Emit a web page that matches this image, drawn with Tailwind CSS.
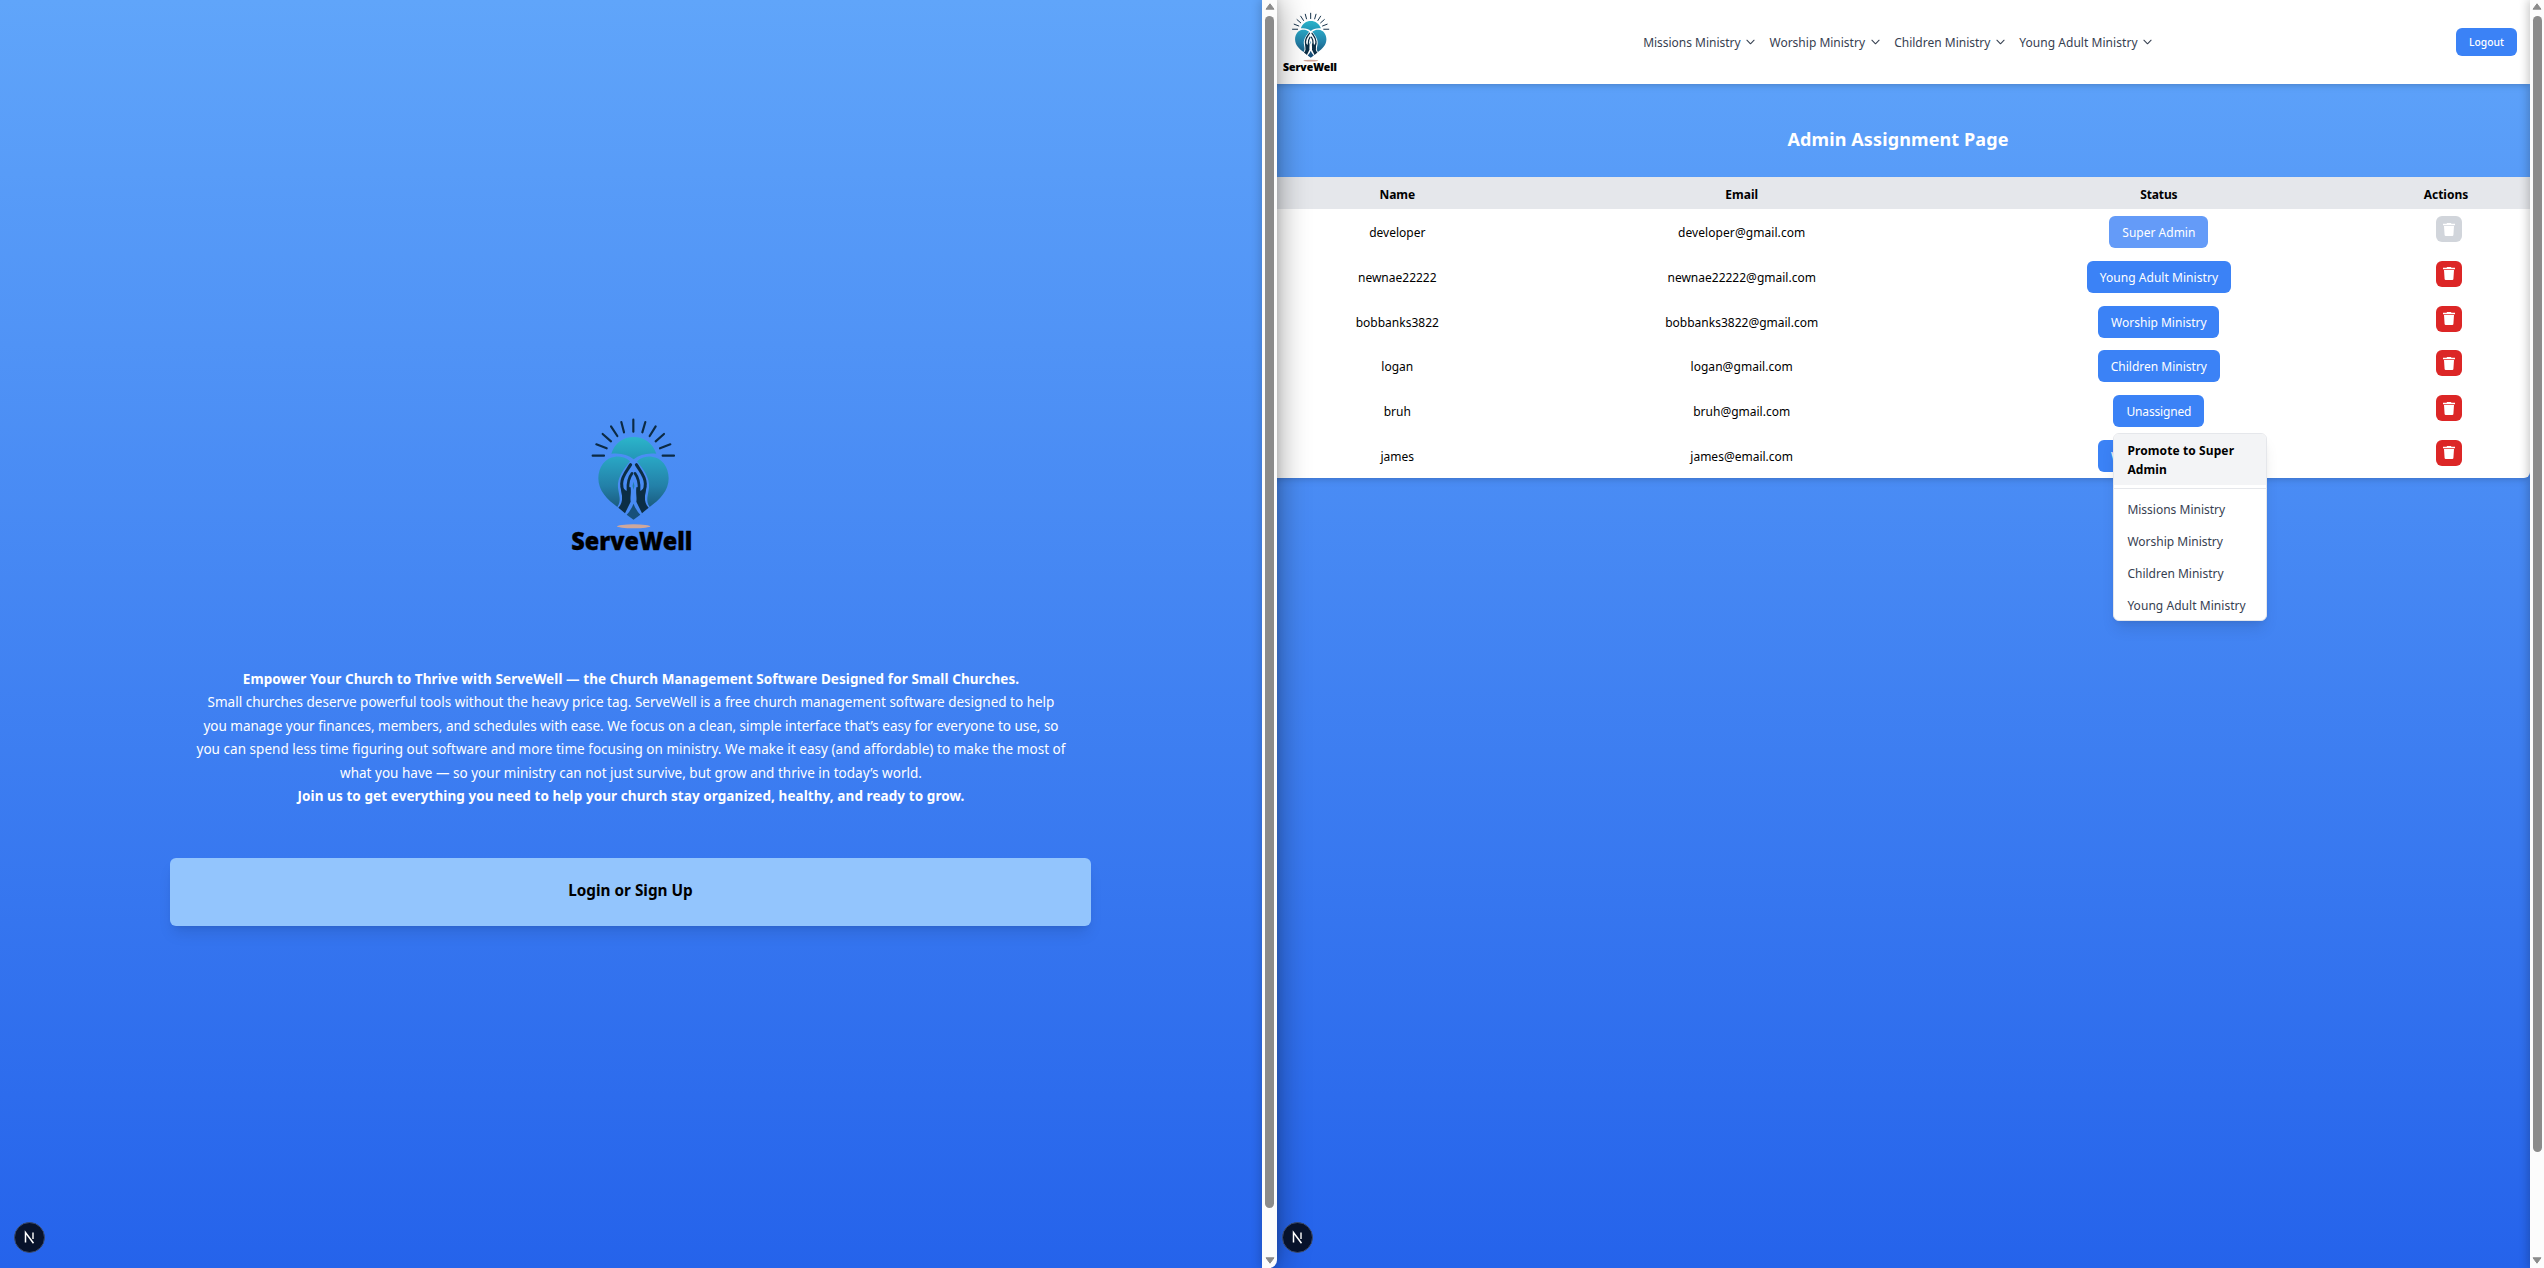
<!DOCTYPE html>
<html lang="en">
<head>
<meta charset="utf-8">
<title>ServeWell</title>
<script src="https://cdn.jsdelivr.net/npm/@tailwindcss/browser@4"></script>
</head>
<body class="h-[1268px] w-[2544px] overflow-hidden bg-[#2563eb] font-['Noto_Sans',sans-serif] text-[12px] text-black">

<svg class="absolute size-0">
  <defs>
    <linearGradient id="dome" x1="0" y1="0" x2="0" y2="1"><stop offset="0" stop-color="#2cb5ca"/><stop offset="1" stop-color="#2396b8"/></linearGradient>
    <linearGradient id="lobe" x1="0" y1="165" x2="0" y2="350" gradientUnits="userSpaceOnUse"><stop offset="0" stop-color="#2aa9c6"/><stop offset=".5" stop-color="#2380a8"/><stop offset="1" stop-color="#164a6c"/></linearGradient>
  </defs>
  <symbol id="logo" viewBox="85 50 375 405">
    <path d="M156 166H190M167 132L198 144M186 101L211 123M211 78L230 107M242 65L250 96M278 58V94M314 65L305 96M345 78L327 107M370 101L345 123M389 132L358 144M366 166H400" fill="none" stroke="#0c2a44" stroke-width="6.5" stroke-linecap="round"/>
    <path d="M212 160C222 128 248 110 279 110C310 110 336 128 347 160C318 157 296 163 279 177C262 163 240 157 212 160Z" fill="url(#dome)"/>
    <g id="half">
      <path d="M268 183C256 172 240 168 224 169C194 171 173 200 173 234C173 272 200 298 230 320C243 302 235 285 232 262C229 232 250 206 268 183Z" fill="url(#lobe)"/>
      <path d="M270 193C258 212 243 228 243 250C243 266 250 280 249 298" fill="none" stroke="#0c2e45" stroke-width="9" stroke-linecap="round"/>
      <path d="M274 219C264 232 261 250 262 268" fill="none" stroke="#0c2e45" stroke-width="8" stroke-linecap="round"/>
      <path d="M240 258Q250 264 257 272L262 262Q270 258 270 262C272 280 268 290 270 304L253 339L233 322C248 308 246 285 240 258Z" fill="#0c2e45"/>
    </g>
    <use href="#half" transform="matrix(-1 0 0 1 557 0)"/>
    <path d="M278.500 310Q286 330 299 343L278.500 358L258 343Q271 330 278.500 310Z" fill="#17507a"/>
    <path d="M278.500 244Q284 256 278.500 268Q273 256 278.500 244Z" fill="#2380a8"/>
    <ellipse cx="279" cy="378" rx="50" ry="6" fill="#cfa79b"/>
    <text x="92" y="448" textLength="363" lengthAdjust="spacingAndGlyphs" font-family="Noto Sans, sans-serif" font-weight="900" font-size="72" stroke="#000" stroke-width="1" stroke-linejoin="round">ServeWell</text>
  </symbol>
  <symbol id="chevron" viewBox="0 0 10 6"><path d="M1 1L5 5L9 1" fill="none" stroke="#374151" stroke-width="1.2" stroke-linecap="round" stroke-linejoin="round"/></symbol>
  <symbol id="trash" viewBox="0 0 12 13"><path d="M4 0H8L8.400 .8H12V2.300H0V.8H3.600ZM1 3.100H11L10.400 12Q10.300 13 9.300 13H2.700Q1.700 13 1.600 12Z" fill="#fff"/></symbol>
  <symbol id="next" viewBox="0 0 31 31">
    <circle cx="15.500" cy="15.500" r="15" fill="#07122b" stroke="#3c4a6a" stroke-width="1"/>
    <path d="M11.500 20.500V10.500L19.500 21.300" fill="none" stroke="#fff" stroke-width="1.500"/>
    <path d="M19 10.500V17" fill="none" stroke="#fff" stroke-width="1.400"/>
  </symbol>
</svg>

<div class="flex h-full">

  <!-- Landing page window -->
  <div class="relative z-10 flex h-full w-[1277px] shrink-0 overflow-visible rounded-br-lg shadow-[0_0_32px_rgba(0,0,0,0.42)]">
    <main class="flex w-[1262px] flex-col items-center bg-linear-to-b/srgb from-[#60a5fa] to-[#2563eb] pt-[417px]">
      <svg class="h-[135px] w-[125px]"><use href="#logo"/></svg>
      <div class="mt-[116px] text-center text-[13.5px] leading-[23.4px] whitespace-nowrap text-white">
        <p class="font-bold tracking-[0.085px]">Empower Your Church to Thrive with ServeWell — the Church Management Software Designed for Small Churches.</p>
        <p>Small churches deserve powerful tools without the heavy price tag. ServeWell is a free church management software designed to help</p>
        <p class="tracking-[-0.014px]">you manage your finances, members, and schedules with ease. We focus on a clean, simple interface that’s easy for everyone to use, so</p>
        <p class="tracking-[0.034px]">you can spend less time figuring out software and more time focusing on ministry. We make it easy (and affordable) to make the most of</p>
        <p class="tracking-[0.017px]">what you have — so your ministry can not just survive, but grow and thrive in today’s world.</p>
        <p class="font-bold tracking-[0.082px]">Join us to get everything you need to help your church stay organized, healthy, and ready to grow.</p>
      </div>
      <button class="mt-[49.6px] mr-px h-[68px] w-[921px] rounded-md bg-[#93c5fd] pb-[3px] text-[15.3px] font-bold shadow-lg">Login or Sign Up</button>
      <svg class="absolute top-[1222px] left-[14px] size-[31px]"><use href="#next"/></svg>
    </main>
    <div class="flex w-[15px] flex-col items-center rounded-br-lg bg-[#fcfcfc] pt-[3px] pb-[4px] shadow-[-2px_0_10px_rgba(0,0,0,0.18)]">
      <svg class="h-[7px] w-[10px]" viewBox="0 0 10 7"><path d="M5 .8L9 6.200H1Z" fill="#8b8b8b" stroke="#8b8b8b" stroke-linejoin="round"/></svg>
      <div class="mt-[6px] h-[1192px] w-[9px] rounded-full bg-[#8b8b8b]"></div>
      <svg class="mt-auto h-[7px] w-[10px]" viewBox="0 0 10 7"><path d="M5 6.200L9 .8H1Z" fill="#8b8b8b" stroke="#8b8b8b" stroke-linejoin="round"/></svg>
    </div>
  </div>

  <!-- Admin window -->
  <div class="-ml-[11px] flex h-full w-[1278px] shrink-0">
    <main class="flex w-[1264px] flex-col bg-linear-to-b/srgb from-[#60a5fa] to-[#2563eb]">
      <header class="flex h-[84px] shrink-0 items-center bg-white pr-[13px] pl-[16px] shadow-md">
        <svg class="h-[60.2px] w-[55.7px]"><use href="#logo"/></svg>
        <nav class="ml-[305.5px] flex gap-[14.5px] pt-[2px] whitespace-nowrap text-[#374151]">
          <span class="flex items-center gap-[5.500px]"><span class="w-[97.300px] tracking-[-0.027px]">Missions Ministry</span><svg class="mb-[2px] h-[6px] w-[9px]"><use href="#chevron"/></svg></span>
          <span class="flex items-center gap-[5.500px]"><span class="w-[95.700px]">Worship Ministry</span><svg class="mb-[2px] h-[6px] w-[9px]"><use href="#chevron"/></svg></span>
          <span class="flex items-center gap-[5.500px]"><span class="w-[96px]">Children Ministry</span><svg class="mb-[2px] h-[6px] w-[9px]"><use href="#chevron"/></svg></span>
          <span class="flex items-center gap-[5.500px]"><span class="w-[118.400px] tracking-[0.048px]">Young Adult Ministry</span><svg class="mb-[2px] h-[6px] w-[9px]"><use href="#chevron"/></svg></span>
        </nav>
        <button class="ml-auto h-[28px] w-[61px] rounded-[6px] bg-[#3b82f6] pt-px text-[10.3px] font-medium text-white">Logout</button>
      </header>
      <h1 class="mt-[41px] text-center text-[18px] leading-[28px] font-bold tracking-[0.12px] text-white">Admin Assignment Page</h1>

      <section class="mt-[24px] rounded-b-md bg-white text-center shadow-md">
        <div class="grid h-[32px] grid-cols-[262.600px_426.200px_407.200px_168px] items-center bg-[#e5e7eb] pt-[3px] font-bold">
          <span>Name</span><span>Email</span><span class="pl-px tracking-[-0.17px]">Status</span><span>Actions</span>
        </div>

        <div class="grid h-[44.800px] grid-cols-[262.600px_426.200px_407.200px_168px] items-start pt-[7px] leading-[34px]">
          <span>developer</span><span class="tracking-[0.068px]">developer@gmail.com</span>
          <span class="flex justify-center pl-px"><button class="h-[32px] w-[99px] rounded-[6px] bg-[#649bf8] leading-[34px] text-white">Super Admin</button></span>
          <span class="flex justify-center pl-[6px]"><button class="flex size-[26px] items-center justify-center rounded-[6px] bg-[#d1d5db]"><svg class="h-[13px] w-[12px]"><use href="#trash"/></svg></button></span>
        </div>
        <div class="grid h-[44.800px] grid-cols-[262.600px_426.200px_407.200px_168px] items-start pt-[7px] leading-[34px]">
          <span>newnae22222</span><span>newnae22222@gmail.com</span>
          <span class="flex justify-center pl-px"><button class="h-[32px] w-[144px] rounded-[6px] bg-[#3b82f6] leading-[34px] tracking-[0.048px] text-white">Young Adult Ministry</button></span>
          <span class="flex justify-center pl-[6px]"><button class="flex size-[26px] items-center justify-center rounded-[6px] bg-[#dc2626]"><svg class="h-[13px] w-[12px]"><use href="#trash"/></svg></button></span>
        </div>
        <div class="grid h-[44.800px] grid-cols-[262.600px_426.200px_407.200px_168px] items-start pt-[7px] leading-[34px]">
          <span>bobbanks3822</span><span>bobbanks3822@gmail.com</span>
          <span class="flex justify-center pl-px"><button class="h-[32px] w-[121px] rounded-[6px] bg-[#3b82f6] leading-[34px] text-white">Worship Ministry</button></span>
          <span class="flex justify-center pl-[6px]"><button class="flex size-[26px] items-center justify-center rounded-[6px] bg-[#dc2626]"><svg class="h-[13px] w-[12px]"><use href="#trash"/></svg></button></span>
        </div>
        <div class="grid h-[44.800px] grid-cols-[262.600px_426.200px_407.200px_168px] items-start pt-[7px] leading-[34px]">
          <span>logan</span><span class="tracking-[0.05px]">logan@gmail.com</span>
          <span class="flex justify-center pl-px"><button class="h-[32px] w-[122px] rounded-[6px] bg-[#3b82f6] leading-[34px] text-white">Children Ministry</button></span>
          <span class="flex justify-center pl-[6px]"><button class="flex size-[26px] items-center justify-center rounded-[6px] bg-[#dc2626]"><svg class="h-[13px] w-[12px]"><use href="#trash"/></svg></button></span>
        </div>
        <div class="grid h-[44.800px] grid-cols-[262.600px_426.200px_407.200px_168px] items-start pt-[7px] leading-[34px]">
          <span>bruh</span><span>bruh@gmail.com</span>
          <span class="flex justify-center pl-px">
            <span class="relative">
              <button class="block h-[32px] w-[91px] rounded-[6px] bg-[#3b82f6] leading-[34px] tracking-[-0.17px] text-white">Unassigned</button>
              <!-- Role menu -->
              <div class="absolute top-[38px] left-0 z-10 h-[188px] w-[154px] overflow-visible rounded-[6px] border border-[#e5e7eb] bg-white text-left shadow-lg">
                <div class="h-[51px] rounded-t-[5px] bg-[#f3f4f6] pt-[7px] pl-[13px] leading-[19px] font-bold tracking-[0.1px]">Promote to Super<br>Admin</div>
                <div class="mt-[3px] mb-[5px] h-px bg-[#e5e7eb]"></div>
                <div class="pl-[13px] leading-[32px] text-[#374151]">
                  <div>Missions Ministry</div><div>Worship Ministry</div><div>Children Ministry</div><div class="tracking-[0.048px]">Young Adult Ministry</div>
                </div>
              </div>
            </span>
          </span>
          <span class="flex justify-center pl-[6px]"><button class="flex size-[26px] items-center justify-center rounded-[6px] bg-[#dc2626]"><svg class="h-[13px] w-[12px]"><use href="#trash"/></svg></button></span>
        </div>
        <div class="grid h-[44.800px] grid-cols-[262.600px_426.200px_407.200px_168px] items-start pt-[7px] leading-[34px]">
          <span>james</span><span>james@email.com</span>
          <span class="flex justify-center pl-px"><button class="h-[32px] w-[121px] rounded-[6px] bg-[#3b82f6] leading-[34px] text-white">Worship Ministry</button></span>
          <span class="flex justify-center pl-[6px]"><button class="flex size-[26px] items-center justify-center rounded-[6px] bg-[#dc2626]"><svg class="h-[13px] w-[12px]"><use href="#trash"/></svg></button></span>
        </div>
      </section>
      <svg class="absolute top-[1222px] left-[1282px] z-20 size-[31px]"><use href="#next"/></svg>
    </main>
    <div class="z-10 flex w-[14px] flex-col items-center bg-[#fcfcfc] pt-[3px] pb-[4px] shadow-[-2px_0_10px_rgba(0,0,0,0.22)]">
      <svg class="h-[7px] w-[10px]" viewBox="0 0 10 7"><path d="M5 .8L9 6.200H1Z" fill="#8b8b8b" stroke="#8b8b8b" stroke-linejoin="round"/></svg>
      <div class="mt-[6px] h-[1136px] w-[9px] rounded-full bg-[#8b8b8b]"></div>
      <svg class="mt-auto h-[7px] w-[10px]" viewBox="0 0 10 7"><path d="M5 6.200L9 .8H1Z" fill="#8b8b8b" stroke="#8b8b8b" stroke-linejoin="round"/></svg>
    </div>
  </div>
</div>
</body>
</html>
